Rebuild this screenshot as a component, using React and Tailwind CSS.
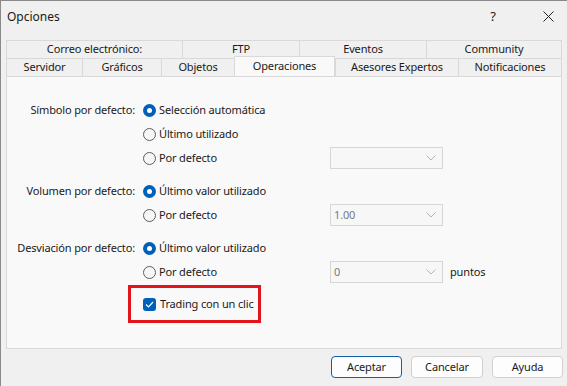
import React from 'react';

const font = { fontFamily: '"Noto Sans", "Open Sans", sans-serif' };

function Radio({ checked }) {
  if (checked) {
    return (
      <span className="w-[13px] h-[13px] rounded-full bg-[#005fb8] flex items-center justify-center shrink-0">
        <span className="w-[5px] h-[5px] rounded-full bg-white" />
      </span>
    );
  }
  return <span className="w-[13px] h-[13px] rounded-full border border-[#5d5d5d] bg-[#f6f6f6] shrink-0" />;
}

function Option({ checked, label }) {
  return (
    <div className="flex items-center gap-[3px] h-6 whitespace-nowrap">
      <Radio checked={checked} />
      <span>{label}</span>
    </div>
  );
}

function Combo({ value }) {
  return (
    <div className="w-[113px] h-[22px] border border-[#d6d6d6] bg-[#f7f7f7] flex items-center justify-between pl-[3px] pr-[5px] text-[#7a7a7a]">
      <span>{value}</span>
      <svg width="10" height="6" viewBox="0 0 10 6" className="mr-[1px]">
        <path d="M0.5 0.5 L5 5 L9.5 0.5" fill="none" stroke="#b5b5b5" strokeWidth="1" />
      </svg>
    </div>
  );
}

function Row({ label, children, combo }) {
  return (
    <div className="flex items-center h-6">
      <div className="w-[136px] text-right pr-[8px] whitespace-nowrap">{label}</div>
      <div className="w-[187px]">{children}</div>
      {combo}
    </div>
  );
}

function Tab({ w, children, active }) {
  return (
    <div
      className={
        active
          ? 'h-[20px] -mt-[2px] bg-[#f9f9f9] border-l border-r border-t border-[#d9d9d9] flex items-center justify-center z-10 whitespace-nowrap'
          : 'h-[18px] border-l border-t border-[#d9d9d9] bg-[#f0f0f0] flex items-center justify-center whitespace-nowrap'
      }
      style={{ width: w }}
    >
      {children}
    </div>
  );
}

export default function App() {
  const row1 = [
    ['Correo electrónico:', 176],
    ['FTP', 117],
    ['Eventos', 127],
    ['Community', 135],
  ];
  const row2 = [
    ['Servidor', 76],
    ['Gráficos', 79],
    ['Objetos', 73],
    ['Operaciones', 101, true],
    ['Asesores Expertos', 123],
    ['Notificaciones', 103],
  ];

  return (
    <div
      className="w-[567px] h-[386px] bg-[#f0f0f0] border-t border-l border-[#8a8a8a] text-[11px] tracking-[-0.15px] text-[#1a1a1a] flex flex-col overflow-hidden"
      style={font}
    >
      {/* Title bar */}
      <div className="h-[31px] flex items-center pl-[6px] shrink-0 text-[12px] tracking-normal">
        <span className="flex-1">Opciones</span>
        <span className="w-[20px] text-center mr-[40px] text-[13px]">?</span>
        <svg width="11" height="11" viewBox="0 0 11 11" className="mr-[13px]">
          <path d="M0.5 0.5 L10.5 10.5 M10.5 0.5 L0.5 10.5" stroke="#222" strokeWidth="1" />
        </svg>
      </div>

      <div className="pl-[5px] pt-[8px] flex flex-col">
        {/* Tab rows */}
        <div className="flex border-r border-[#d9d9d9] w-[556px]">
          {row1.map(([t, w]) => (
            <Tab key={t} w={w}>{t}</Tab>
          ))}
        </div>
        <div className="flex border-r border-[#d9d9d9] w-[556px] items-end">
          {row2.map(([t, w, a]) => (
            <Tab key={t} w={w} active={a}>{t}</Tab>
          ))}
        </div>

        {/* Panel */}
        <div className="w-[556px] h-[273px] bg-[#f9f9f9] border border-[#d9d9d9] pt-[21px]">
          <div className="flex flex-col gap-[9px]">
            <div className="flex flex-col">
              <Row label="Símbolo por defecto:">
                <Option checked label="Selección automática" />
              </Row>
              <Row>
                <Option label="Último utilizado" />
              </Row>
              <Row combo={<Combo value="" />}>
                <Option label="Por defecto" />
              </Row>
            </div>
            <div className="flex flex-col">
              <Row label="Volumen por defecto:">
                <Option checked label="Último valor utilizado" />
              </Row>
              <Row combo={<Combo value="1.00" />}>
                <Option label="Por defecto" />
              </Row>
            </div>
            <div className="flex flex-col">
              <Row label="Desviación por defecto:">
                <Option checked label="Último valor utilizado" />
              </Row>
              <Row
                combo={
                  <div className="flex items-center gap-[7px]">
                    <Combo value="0" />
                    <span>puntos</span>
                  </div>
                }
              >
                <Option label="Por defecto" />
              </Row>
            </div>
          </div>

          <div className="ml-[121px] mt-[1px] w-[133px] h-[38px] border-[3px] border-[#e3141c] flex items-center pl-[12px] gap-[4px] whitespace-nowrap">
            <span className="w-[13px] h-[13px] rounded-[3px] bg-[#005fb8] flex items-center justify-center shrink-0">
              <svg width="9" height="7" viewBox="0 0 9 7">
                <path d="M1 3.5 L3.5 6 L8 1" fill="none" stroke="white" strokeWidth="1.2" />
              </svg>
            </span>
            <span>Trading con un clic</span>
          </div>
        </div>

        {/* Buttons */}
        <div className="flex justify-end gap-[9px] pr-[4px] mt-[7px] w-[561px]">
          <button className="w-[71px] h-[22px] rounded-[4px] border border-[#0f5fa5] bg-[#fdfdfd]">Aceptar</button>
          <button className="w-[72px] h-[22px] rounded-[4px] border border-[#d0d0d0] bg-[#fdfdfd]">Cancelar</button>
          <button className="w-[71px] h-[22px] rounded-[4px] border border-[#d0d0d0] bg-[#fdfdfd]">Ayuda</button>
        </div>
      </div>
    </div>
  );
}
